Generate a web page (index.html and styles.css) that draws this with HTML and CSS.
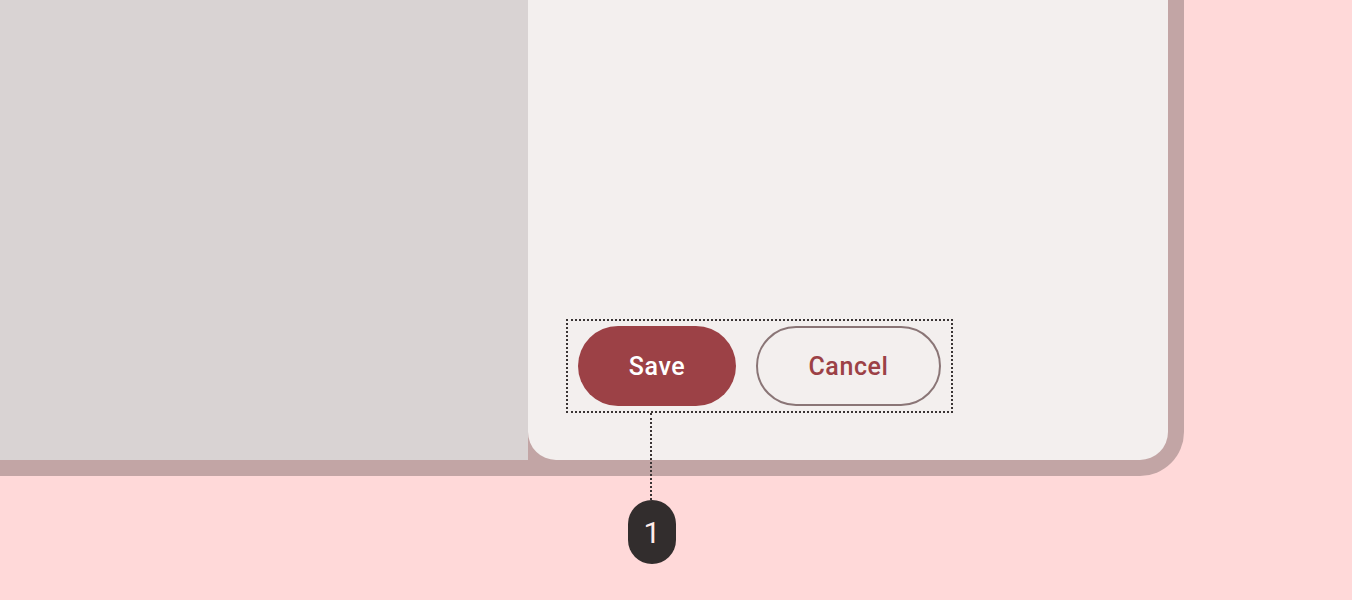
FILE: index.html
```html
<!DOCTYPE html>
<html lang="en">
<head>
<meta charset="utf-8">
<title>Dialog actions</title>
<link rel="stylesheet" href="styles.css">
</head>
<body>
<div class="stage">
  <div class="frame">
    <div class="scrim"></div>
    <div class="sheet">
      <div class="actions">
        <button class="btn btn-filled">Save</button>
        <button class="btn btn-outlined">Cancel</button>
      </div>
    </div>
  </div>
  <div class="callout">
    <div class="callout-line"></div>
    <div class="callout-badge">1</div>
  </div>
</div>
</body>
</html>
```
FILE: styles.css
```css
html, body {
  margin: 0;
  padding: 0;
  background: #ffd9d9;
  font-family: Roboto, "Liberation Sans", sans-serif;
}
.stage {
  position: relative;
  width: 1352px;
  height: 600px;
  overflow: hidden;
}
.frame {
  display: flex;
  width: 1168px;
  height: 460px;
  padding: 0 16px 16px 0;
  background: #c2a5a5;
  border-bottom-right-radius: 44px;
}
.scrim {
  width: 528px;
  flex: none;
  background: #d9d3d3;
}
.sheet {
  flex: 1;
  display: flex;
  flex-direction: column;
  justify-content: flex-end;
  align-items: flex-start;
  background: #f3efee;
  border-radius: 0 0 28px 28px;
}
.actions {
  display: flex;
  gap: 20px;
  padding: 5px 10px;
  margin: 0 0 47px 38px;
  border: 2px dotted #3a3434;
}
.btn {
  height: 80px;
  border-radius: 40px;
  font-family: Roboto, "Liberation Sans", sans-serif;
  font-size: 25px;
  font-weight: 500;
  letter-spacing: 0.6px;
  padding: 0;
  cursor: pointer;
}
.btn-filled {
  width: 158px;
  background: #9c4146;
  color: #ffffff;
  border: none;
}
.btn-outlined {
  width: 185px;
  background: transparent;
  color: #9c4146;
  border: 2px solid #8a7576;
}
.callout {
  position: absolute;
  left: 628px;
  top: 413px;
  width: 48px;
  display: flex;
  flex-direction: column;
}
.callout-line {
  width: 0;
  height: 87px;
  border-left: 2px dotted #3a3434;
  margin-left: 22px;
}
.callout-badge {
  width: 48px;
  height: 64px;
  border-radius: 24px;
  background: #322d2d;
  color: #ffeceb;
  font-size: 30px;
  display: flex;
  align-items: center;
  justify-content: center;
}
```
